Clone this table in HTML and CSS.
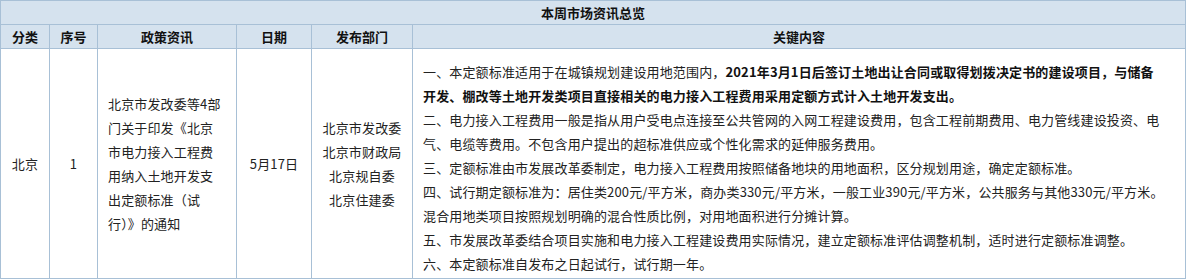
FILE: index.html
```html
<!DOCTYPE html>
<html lang="zh-CN">
<head>
<meta charset="utf-8">
<link rel="stylesheet" href="styles.css">
</head>
<body>
<table class="summary">
  <colgroup>
    <col class="c-cat">
    <col class="c-no">
    <col class="c-policy">
    <col class="c-date">
    <col class="c-dept">
    <col class="c-key">
  </colgroup>
  <thead>
    <tr class="title-row"><th colspan="6">本周市场资讯总览</th></tr>
    <tr class="head-row">
      <th>分类</th><th>序号</th><th>政策资讯</th><th>日期</th><th>发布部门</th><th>关键内容</th>
    </tr>
  </thead>
  <tbody>
    <tr>
      <td class="center">北京</td>
      <td class="center">1</td>
      <td class="policy">北京市发改委等4部<br>门关于印发《北京<br>市电力接入工程费<br>用纳入土地开发支<br>出定额标准（试<br>行）》的通知</td>
      <td class="center">5月17日</td>
      <td class="center dept">北京市发改委<br>北京市财政局<br>北京规自委<br>北京住建委</td>
      <td class="key">
        <p>一、本定额标准适用于在城镇规划建设用地范围内，<strong>2021年3月1日后签订土地出让合同或取得划拨决定书的建设项目，与储备<br>开发、棚改等土地开发类项目直接相关的电力接入工程费用采用定额方式计入土地开发支出。</strong></p>
        <p>二、电力接入工程费用一般是指从用户受电点连接至公共管网的入网工程建设费用，包含工程前期费用、电力管线建设投资、电<br>气、电缆等费用。不包含用户提出的超标准供应或个性化需求的延伸服务费用。</p>
        <p>三、定额标准由市发展改革委制定，电力接入工程费用按照储备地块的用地面积，区分规划用途，确定定额标准。</p>
        <p>四、试行期定额标准为：居住类200元/平方米，商办类330元/平方米，一般工业390元/平方米，公共服务与其他330元/平方米。<br>混合用地类项目按照规划明确的混合性质比例，对用地面积进行分摊计算。</p>
        <p>五、市发展改革委结合项目实施和电力接入工程建设费用实际情况，建立定额标准评估调整机制，适时进行定额标准调整。</p>
        <p>六、本定额标准自发布之日起试行，试行期一年。</p>
      </td>
    </tr>
  </tbody>
</table>
</body>
</html>
```
FILE: styles.css
```css
html, body {
  margin: 0;
  padding: 0;
  background: #ffffff;
}
body {
  font-family: "Noto Sans CJK SC", "Noto Sans", sans-serif;
  font-size: 13px;
  color: #222;
}
.summary {
  border-collapse: collapse;
  table-layout: fixed;
  width: 1185px;
}
.c-cat { width: 49px; }
.c-no { width: 48px; }
.c-policy { width: 139px; }
.c-date { width: 75px; }
.c-dept { width: 101px; }
.c-key { width: 773px; }
.summary th,
.summary td {
  border: 1px solid #a8c0d6;
}
.summary th {
  background: #d5e2ee;
  color: #111;
  font-weight: bold;
  height: 23px;
  padding: 0;
  line-height: 23px;
  text-align: center;
}
.summary td {
  vertical-align: middle;
  line-height: 24px;
  letter-spacing: 0.15px;
}
.center {
  text-align: center;
  padding: 0 4px;
}
.policy {
  padding: 0 10px;
  white-space: nowrap;
}
.key {
  padding: 11px 8px 2px 10px;
  white-space: nowrap;
}
.key p {
  margin: 0;
}
.key strong {
  font-weight: bold;
  color: #111;
}
```
